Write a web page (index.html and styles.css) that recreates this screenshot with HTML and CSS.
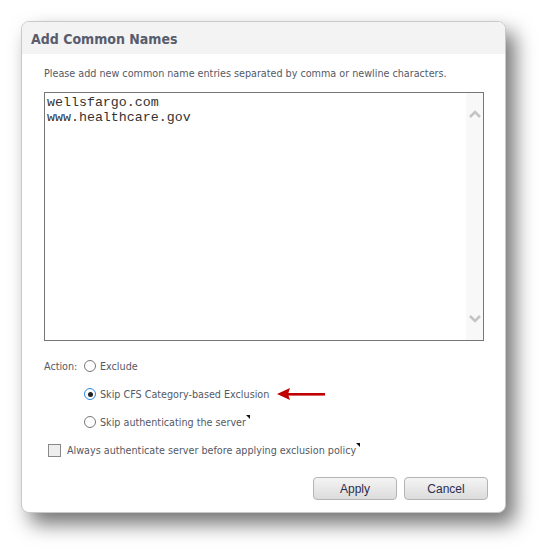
FILE: index.html
```html
<!DOCTYPE html>
<html>
<head>
<meta charset="utf-8">
<link rel="stylesheet" href="styles.css">
</head>
<body>
<div class="dialog">
  <div class="header">Add Common Names</div>
  <div class="content">
    <p class="intro">Please add new common name entries separated by comma or newline characters.</p>
    <div class="textarea">
      <div class="text">wellsfargo.com<br>www.healthcare.gov</div>
      <div class="scroll">
        <svg width="14" height="10" viewBox="0 0 14 10"><path d="M2 8 L7 3 L12 8" fill="none" stroke="#c4c4c4" stroke-width="2.6"/></svg>
        <svg width="14" height="10" viewBox="0 0 14 10"><path d="M2 2 L7 7 L12 2" fill="none" stroke="#c4c4c4" stroke-width="2.6"/></svg>
      </div>
    </div>
    <div class="actions">
      <div class="row"><span class="label">Action:</span><span class="radio"></span><span>Exclude</span></div>
      <div class="row indent"><span class="radio checked"></span><span>Skip CFS Category-based Exclusion</span>
        <svg class="arrow" width="48" height="12" viewBox="0 0 48 12"><path d="M0 6 L13 0 L11 6 L13 12 Z" fill="#c00000"/><rect x="10" y="5" width="38" height="2.6" fill="#c00000"/></svg>
      </div>
      <div class="row indent"><span class="radio"></span><span class="tip">Skip authenticating the server</span></div>
      <div class="row check"><span class="box"></span><span class="tip">Always authenticate server before applying exclusion policy</span></div>
    </div>
    <div class="buttons">
      <button class="btn">Apply</button>
      <button class="btn">Cancel</button>
    </div>
  </div>
</div>
</body>
</html>
```
FILE: styles.css
```css
html, body { margin: 0; padding: 0; background: #fff; }
body { width: 549px; height: 555px; overflow: hidden; font-family: Tahoma, "DejaVu Sans Condensed", "Liberation Sans", sans-serif; }
.dialog {
  position: relative;
  margin: 21px 0 0 21px;
  width: 485px;
  height: 492px;
  border: 1px solid #c9c9c9;
  border-radius: 8px;
  background: #fff;
  box-shadow: 9px 11px 20px rgba(0,0,0,0.55);
  overflow: hidden;
  box-sizing: border-box;
}
.header {
  height: 32px;
  background: #f3f3f3;
  color: #585c6c;
  font-weight: bold;
  font-size: 14px;
  line-height: 34px;
  padding-left: 9px;
}
.content { padding: 12px 21px 0 22px; color: #555965; font-size: 10.7px; }
.intro { margin: 0 0 11px 0; line-height: 15px; }
.textarea {
  height: 249px;
  border: 1px solid #767676;
  display: flex;
  justify-content: space-between;
  box-sizing: border-box;
}
.text { font-family: "Liberation Mono", monospace; font-size: 13.3px; line-height: 15px; color: #333; padding: 2px 0 0 2px; }
.scroll { width: 17px; background: #f8f8f8; display: flex; flex-direction: column; justify-content: space-between; align-items: center; padding: 16px 0 16px; }
.actions { margin-top: 17px; }
.row { display: flex; align-items: center; height: 16px; margin-bottom: 12px; }
.row.indent { padding-left: 40px; }
.label { width: 40px; }
.radio { width: 12px; height: 12px; border: 1px solid #777; border-radius: 50%; margin-right: 4px; box-sizing: border-box; position: relative; background: #fff; }
.radio.checked { border-color: #2b8be0; }
.radio.checked::after { content: ""; position: absolute; left: 2.5px; top: 2.5px; width: 5px; height: 5px; border-radius: 50%; background: #222; }
.arrow { margin-left: 8px; }
.tip { position: relative; }
.tip::after { content: ""; position: absolute; right: -4px; top: -1px; border-top: 4px solid #111; border-left: 4px solid transparent; }
.check { padding-left: 4px; }
.box { width: 13px; height: 13px; border: 1px solid #888; background: #eee; margin-right: 6px; box-sizing: border-box; }
.buttons { display: flex; justify-content: flex-end; gap: 7px; margin-top: 19px; margin-right: -4px; }
.btn {
  width: 84px; height: 23px;
  border: 1px solid #b4b4b4;
  border-radius: 4px;
  background: linear-gradient(#f4f4f4, #dcdcdc);
  font-family: "Liberation Sans", Arial, sans-serif;
  font-size: 12px;
  color: #2c2c50;
}
```
